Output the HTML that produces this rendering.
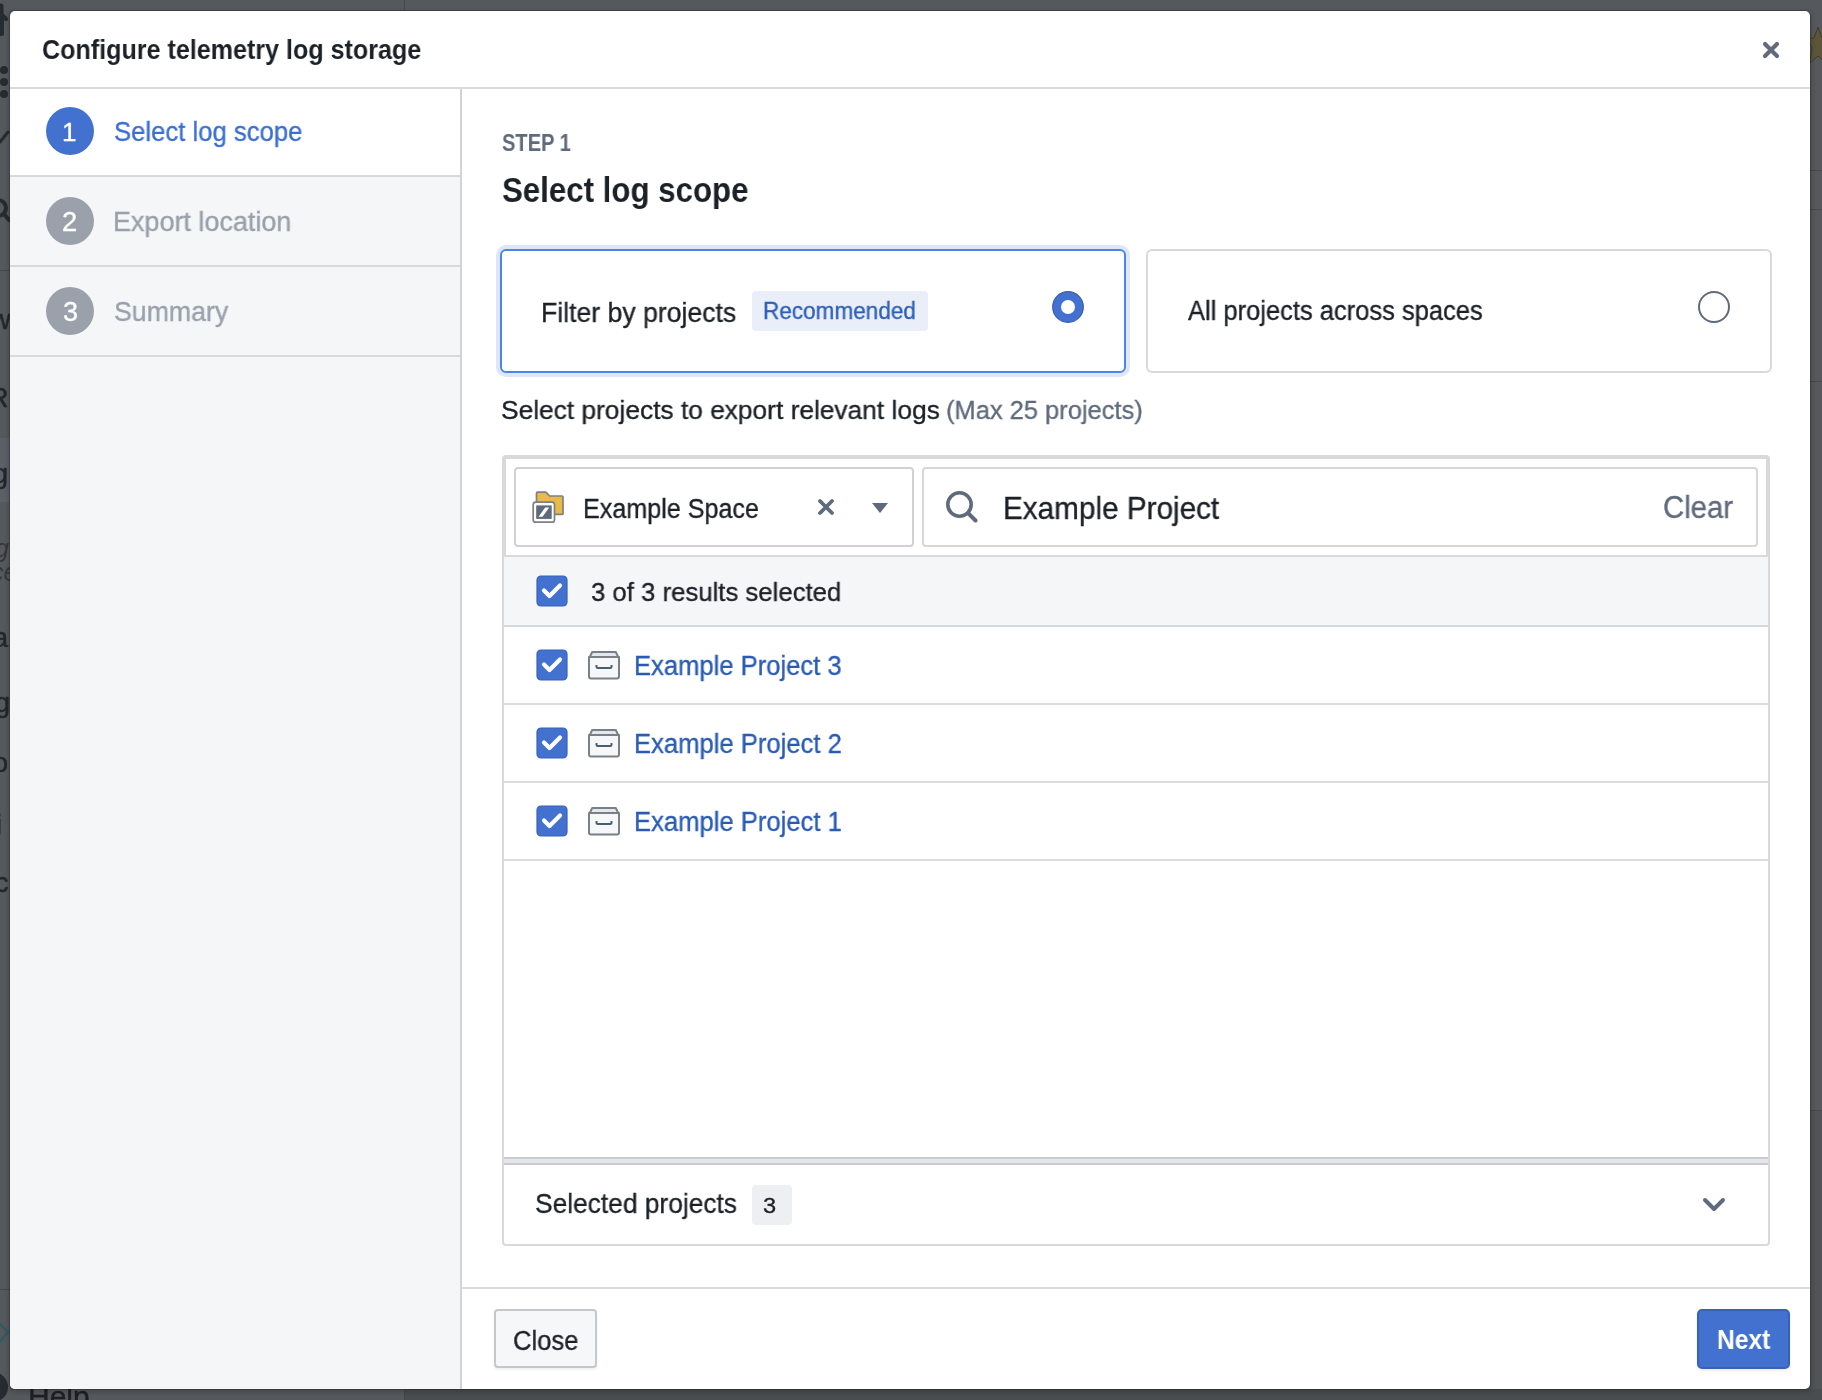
<!DOCTYPE html>
<html><head><meta charset="utf-8"><style>
html,body{margin:0;padding:0;}
body{width:1822px;height:1400px;position:relative;overflow:hidden;background:#55585c;font-family:"Liberation Sans",sans-serif;}
.a{position:absolute;display:block;}
.t{position:absolute;white-space:nowrap;line-height:1;transform-origin:0 0;will-change:transform;}
</style></head><body>
<!-- background hints -->
<div class="a" style="left:0;top:0;width:1822px;height:1400px;background:#55585c"></div>
<div class="a" style="left:405px;top:1110px;width:1417px;height:290px;background:#505357"></div><div class="a" style="left:405px;top:1389px;width:1417px;height:11px;background:#4a4d50"></div><div class="a" style="left:1810px;top:1110px;width:12px;height:1px;background:#45484c"></div>
<div class="a" style="left:404px;top:0;width:1px;height:1400px;background:#45484c"></div>
<div class="a" style="left:1810px;top:170px;width:12px;height:1px;background:#46494d"></div>
<div class="a" style="left:1810px;top:209px;width:12px;height:1px;background:#46494d"></div>
<div class="a" style="left:1810px;top:381px;width:12px;height:1px;background:#46494d"></div>
<svg class="a" style="left:1806px;top:26px" width="24" height="38" viewBox="0 0 24 38"><path d="M12 1 L16 12 L24 13 L18 21 L20 37 L12 30 L4 37 L6 21 L0 13 L8 12 Z" fill="#5d5539" stroke="#3f3b2c" stroke-width="1"/></svg>
<!-- left nav fragments -->
<svg class="a" style="left:-10px;top:2px" width="20" height="36" viewBox="0 0 20 36"><path d="M11 4 V30" stroke="#262a31" stroke-width="5" stroke-linecap="round"/><path d="M11 12 L16 17" stroke="#262a31" stroke-width="4" stroke-linecap="round"/><rect x="0" y="17" width="14" height="17" rx="2" fill="#262a31"/></svg>
<div class="a" style="left:0;top:66px;width:8px;height:8px;border-radius:50%;background:#262a31"></div>
<div class="a" style="left:0;top:78px;width:8px;height:8px;border-radius:50%;background:#262a31"></div>
<div class="a" style="left:0;top:90px;width:8px;height:8px;border-radius:50%;background:#262a31"></div>
<svg class="a" style="left:0;top:128px" width="10" height="18" viewBox="0 0 10 18"><path d="M0 14 L8 4" stroke="#262a31" stroke-width="3" stroke-linecap="round"/></svg>
<svg class="a" style="left:-12px;top:196px" width="24" height="32" viewBox="0 0 24 32"><circle cx="10" cy="12" r="8" fill="none" stroke="#262a31" stroke-width="4"/><path d="M16 18 L21 24" stroke="#262a31" stroke-width="4" stroke-linecap="round"/></svg>
<div class="a" style="left:0;top:270px;width:10px;height:1px;background:#45484c"></div>
<div class="a" style="left:0;top:438px;width:10px;height:64px;background:#5b5f66"></div>
<div class="t" style="left:-9px;top:307px;font-size:27px;color:#23272d;-webkit-text-stroke:0.5px #23272d">w</div>
<div class="t" style="left:-11px;top:385px;font-size:27px;color:#23272d;-webkit-text-stroke:0.5px #23272d">R</div>
<div class="t" style="left:-7px;top:461px;font-size:27px;color:#23272d;-webkit-text-stroke:0.5px #23272d">g</div>
<div class="t" style="left:-5px;top:536px;font-size:25px;font-style:italic;color:#34383e">g</div>
<div class="t" style="left:-9px;top:560px;font-size:25px;font-style:italic;color:#34383e">ce</div>
<div class="t" style="left:-7px;top:625px;font-size:27px;color:#23272d;-webkit-text-stroke:0.5px #23272d">a</div>
<div class="t" style="left:-5px;top:690px;font-size:27px;color:#23272d;-webkit-text-stroke:0.5px #23272d">g</div>
<div class="t" style="left:-7px;top:750px;font-size:27px;color:#23272d;-webkit-text-stroke:0.5px #23272d">o</div>
<div class="t" style="left:-4px;top:812px;font-size:27px;color:#23272d;-webkit-text-stroke:0.5px #23272d">i</div>
<div class="t" style="left:-5px;top:870px;font-size:27px;color:#23272d;-webkit-text-stroke:0.5px #23272d">c</div>
<div class="a" style="left:0;top:1289px;width:10px;height:1px;background:#45484c"></div>
<svg class="a" style="left:-6px;top:1318px" width="16" height="30" viewBox="0 0 16 30"><path d="M2 2 L14 14 L2 28" fill="none" stroke="#2f5a60" stroke-width="2.5"/></svg>
<div class="a" style="left:-22px;top:1372px;width:30px;height:30px;border-radius:50%;background:#262a31"></div>
<div class="t" style="left:28px;top:1382px;font-size:30px;color:#1c1f24;-webkit-text-stroke:0.4px #1c1f24">Help</div>

<!-- dialog -->
<div class="a" style="left:10px;top:11px;width:1800px;height:1378px;background:#fff;border-radius:5px;overflow:hidden;box-shadow:0 0 0 1px rgba(17,20,24,0.28),0 2px 5px 1px rgba(17,20,24,0.25)">
  <div class="a" style="left:0;top:76px;width:1800px;height:2px;background:#dadada"></div>
  <div class="a" style="left:0;top:78px;width:450px;height:1300px;background:#f5f6f8"></div>
  <div class="a" style="left:450px;top:78px;width:2px;height:1300px;background:#d1d3d7"></div>
  <div class="a" style="left:0;top:78px;width:450px;height:86px;background:#ffffff"></div>
  <div class="a" style="left:0;top:164px;width:450px;height:2px;background:#d9d9d9"></div>
  <div class="a" style="left:0;top:254px;width:450px;height:2px;background:#d9d9d9"></div>
  <div class="a" style="left:0;top:344px;width:450px;height:2px;background:#d9d9d9"></div>
  <div class="a" style="left:452px;top:1276px;width:1348px;height:2px;background:#dadada"></div>
</div>

<!-- close x -->
<svg class="a" style="left:1761px;top:40px" width="20" height="20" viewBox="0 0 20 20"><path d="M4 4 L16 16 M16 4 L4 16" stroke="#5f6b7c" stroke-width="4.2" stroke-linecap="round"/></svg>

<!-- step circles -->
<div class="a" style="left:46px;top:107px;width:48px;height:48px;border-radius:50%;background:#4371cf"></div>
<div class="a" style="left:46px;top:197px;width:48px;height:48px;border-radius:50%;background:#9aa1ab"></div>
<div class="a" style="left:46px;top:287px;width:48px;height:48px;border-radius:50%;background:#9aa1ab"></div>

<!-- cards -->
<div class="a" style="left:500px;top:249px;width:622px;height:120px;border:2px solid #4c86e3;border-radius:6px;box-shadow:0 0 0 4px #dde7f8;background:#fff"></div>
<div class="a" style="left:1146px;top:249px;width:622px;height:120px;border:2px solid #d9d9d9;border-radius:6px;background:#fff"></div>
<div class="a" style="left:752px;top:291px;width:176px;height:40px;border-radius:4px;background:#e9eef8"></div>
<!-- radio checked -->
<svg class="a" style="left:1052px;top:291px" width="32" height="32" viewBox="0 0 32 32"><circle cx="16" cy="16" r="15.3" fill="#4371cf" stroke="#3560b0" stroke-width="1.2"/><circle cx="16" cy="16" r="7" fill="#fff"/></svg>
<!-- radio unchecked -->
<svg class="a" style="left:1698px;top:291px" width="32" height="32" viewBox="0 0 32 32"><circle cx="16" cy="16" r="15" fill="#fff" stroke="#5f6b7c" stroke-width="2"/></svg>

<!-- project box -->
<div class="a" style="left:502px;top:455px;width:1264px;height:787px;border:2px solid #d9d9d9;border-radius:4px;background:#fff"></div>
<div class="a" style="left:504px;top:457px;width:1264px;height:100px;border:2px solid #d9d9d9;border-bottom:none;box-sizing:border-box"></div>
<div class="a" style="left:504px;top:555px;width:1264px;height:2px;background:#d9d9d9"></div>
<div class="a" style="left:504px;top:557px;width:1264px;height:68px;background:#f5f6f8"></div>
<div class="a" style="left:504px;top:625px;width:1264px;height:2px;background:#d6d8db"></div>
<div class="a" style="left:504px;top:703px;width:1264px;height:2px;background:#dcdcdc"></div>
<div class="a" style="left:504px;top:781px;width:1264px;height:2px;background:#dcdcdc"></div>
<div class="a" style="left:504px;top:859px;width:1264px;height:2px;background:#dcdcdc"></div>
<div class="a" style="left:504px;top:1157px;width:1264px;height:2px;background:#c9cbcf"></div>
<div class="a" style="left:504px;top:1159px;width:1264px;height:4px;background:#e5e7ea"></div>
<div class="a" style="left:504px;top:1163px;width:1264px;height:2px;background:#c9cbcf"></div>

<!-- select -->
<div class="a" style="left:514px;top:467px;width:396px;height:76px;border:2px solid #cfd1d4;border-radius:4px;background:#fff"></div>
<div class="a" style="left:922px;top:467px;width:832px;height:76px;border:2px solid #d7d7d7;border-radius:4px;background:#fff"></div>
<!-- folder icon -->
<svg class="a" style="left:530px;top:489px" width="36" height="36" viewBox="0 0 36 36">
 <path d="M7.5 3.2 H15.8 L19.7 7 H32 a1 1 0 0 1 1 1 V24.4 a1 1 0 0 1 -1 1 H7.5 a1 1 0 0 1 -1 -1 V4.2 a1 1 0 0 1 1 -1 Z" fill="#e9b949" stroke="#7d8085" stroke-width="1.7"/>
 <rect x="3.2" y="13.2" width="21.3" height="20" rx="2.5" fill="#fff" stroke="#7d8085" stroke-width="1.7"/>
 <rect x="6.2" y="16.4" width="15.5" height="13.5" fill="#5f6b7c"/>
 <path d="M8.5 27.8 H12.5 L19.2 18.6 H15.2 Z" fill="#fff"/>
</svg>
<!-- select x -->
<svg class="a" style="left:816px;top:497px" width="20" height="20" viewBox="0 0 20 20"><path d="M4 4 L16 16 M16 4 L4 16" stroke="#5f6b7c" stroke-width="3.8" stroke-linecap="round"/></svg>
<!-- caret -->
<svg class="a" style="left:872px;top:503px" width="16" height="10" viewBox="0 0 16 10"><path d="M0 0 H16 L8 10 Z" fill="#5f6b7c"/></svg>
<!-- search icon -->
<svg class="a" style="left:946px;top:491px" width="32" height="32" viewBox="0 0 32 32"><circle cx="13.5" cy="13.5" r="11.7" fill="none" stroke="#5f6b7c" stroke-width="3.6"/><path d="M22 22 L29.5 29.5" stroke="#5f6b7c" stroke-width="4" stroke-linecap="round"/></svg>

<svg class="a" style="left:536px;top:575px" width="32" height="32" viewBox="0 0 32 32"><rect x="1" y="1" width="30" height="30" rx="4" fill="#4371cf" stroke="#3a62b6" stroke-width="1.2"/><path d="M8 15.5 L13.5 21 L24 10.5" fill="none" stroke="#fff" stroke-width="4.2" stroke-linecap="round" stroke-linejoin="round"/></svg>
<svg class="a" style="left:536px;top:649px" width="32" height="32" viewBox="0 0 32 32"><rect x="1" y="1" width="30" height="30" rx="4" fill="#4371cf" stroke="#3a62b6" stroke-width="1.2"/><path d="M8 15.5 L13.5 21 L24 10.5" fill="none" stroke="#fff" stroke-width="4.2" stroke-linecap="round" stroke-linejoin="round"/></svg><svg class="a" style="left:588px;top:649px" width="32" height="32" viewBox="0 0 32 32"><path d="M1.8 8 L4.2 3 H27.8 L30.2 8 Z" fill="#e3e8f0" stroke="#7b8085" stroke-width="2" stroke-linejoin="round"/><path d="M1 8 H31 V27.5 a2 2 0 0 1 -2 2 H3 a2 2 0 0 1 -2 -2 Z" fill="#f6f7f9" stroke="#7b8085" stroke-width="2" stroke-linejoin="round"/><path d="M8.5 16 v1.5 a1.5 1.5 0 0 0 1.5 1.5 h12 a1.5 1.5 0 0 0 1.5 -1.5 v-1.5" fill="none" stroke="#4a5d70" stroke-width="2"/></svg><svg class="a" style="left:536px;top:727px" width="32" height="32" viewBox="0 0 32 32"><rect x="1" y="1" width="30" height="30" rx="4" fill="#4371cf" stroke="#3a62b6" stroke-width="1.2"/><path d="M8 15.5 L13.5 21 L24 10.5" fill="none" stroke="#fff" stroke-width="4.2" stroke-linecap="round" stroke-linejoin="round"/></svg><svg class="a" style="left:588px;top:727px" width="32" height="32" viewBox="0 0 32 32"><path d="M1.8 8 L4.2 3 H27.8 L30.2 8 Z" fill="#e3e8f0" stroke="#7b8085" stroke-width="2" stroke-linejoin="round"/><path d="M1 8 H31 V27.5 a2 2 0 0 1 -2 2 H3 a2 2 0 0 1 -2 -2 Z" fill="#f6f7f9" stroke="#7b8085" stroke-width="2" stroke-linejoin="round"/><path d="M8.5 16 v1.5 a1.5 1.5 0 0 0 1.5 1.5 h12 a1.5 1.5 0 0 0 1.5 -1.5 v-1.5" fill="none" stroke="#4a5d70" stroke-width="2"/></svg><svg class="a" style="left:536px;top:805px" width="32" height="32" viewBox="0 0 32 32"><rect x="1" y="1" width="30" height="30" rx="4" fill="#4371cf" stroke="#3a62b6" stroke-width="1.2"/><path d="M8 15.5 L13.5 21 L24 10.5" fill="none" stroke="#fff" stroke-width="4.2" stroke-linecap="round" stroke-linejoin="round"/></svg><svg class="a" style="left:588px;top:805px" width="32" height="32" viewBox="0 0 32 32"><path d="M1.8 8 L4.2 3 H27.8 L30.2 8 Z" fill="#e3e8f0" stroke="#7b8085" stroke-width="2" stroke-linejoin="round"/><path d="M1 8 H31 V27.5 a2 2 0 0 1 -2 2 H3 a2 2 0 0 1 -2 -2 Z" fill="#f6f7f9" stroke="#7b8085" stroke-width="2" stroke-linejoin="round"/><path d="M8.5 16 v1.5 a1.5 1.5 0 0 0 1.5 1.5 h12 a1.5 1.5 0 0 0 1.5 -1.5 v-1.5" fill="none" stroke="#4a5d70" stroke-width="2"/></svg>

<!-- selected projects tag -->
<div class="a" style="left:752px;top:1185px;width:40px;height:40px;border-radius:4px;background:#edeff2"></div>
<!-- chevron -->
<svg class="a" style="left:1700px;top:1194px" width="28" height="20" viewBox="0 0 28 20"><path d="M5 6 L14 15 L23 6" fill="none" stroke="#5f6b7c" stroke-width="4" stroke-linecap="round" stroke-linejoin="round"/></svg>

<!-- buttons -->
<div class="a" style="left:494px;top:1309px;width:99px;height:55px;border:2px solid #c5c7cb;border-radius:4px;background:#f6f7f9;box-shadow:0 2px 3px rgba(0,0,0,0.06)"></div>
<div class="a" style="left:1697px;top:1309px;width:89px;height:56px;border:2px solid #3a62b4;border-radius:5px;background:#4371cf;box-shadow:0 2px 3px rgba(0,0,0,0.08)"></div>

<div class="t" style="left:42.00px;top:36.75px;font-size:27px;font-weight:bold;color:#1c2127;transform:scaleX(0.9294)">Configure telemetry log storage</div><div class="t" style="left:62.43px;top:119.40px;font-size:26px;font-weight:normal;color:#ffffff;transform:scaleX(0.9928);-webkit-text-stroke:0.35px #ffffff">1</div><div class="t" style="left:113.52px;top:118.55px;font-size:27px;font-weight:normal;color:#3d6fd0;transform:scaleX(0.9515);-webkit-text-stroke:0.35px #3d6fd0">Select log scope</div><div class="t" style="left:62.33px;top:208.95px;font-size:27px;font-weight:normal;color:#ffffff;transform:scaleX(1.0145);-webkit-text-stroke:0.35px #ffffff">2</div><div class="t" style="left:113.44px;top:207.52px;font-size:27.5px;font-weight:normal;color:#98a0ab;transform:scaleX(0.9808);-webkit-text-stroke:0.35px #98a0ab">Export location</div><div class="t" style="left:62.63px;top:298.95px;font-size:27px;font-weight:normal;color:#ffffff;transform:scaleX(0.9929);-webkit-text-stroke:0.35px #ffffff">3</div><div class="t" style="left:113.97px;top:297.52px;font-size:27.5px;font-weight:normal;color:#98a0ab;transform:scaleX(0.9703);-webkit-text-stroke:0.35px #98a0ab">Summary</div><div class="t" style="left:501.80px;top:132.05px;font-size:23px;font-weight:bold;color:#5f6b7c;transform:scaleX(0.8734)">STEP 1</div><div class="t" style="left:502.16px;top:171.75px;font-size:35px;font-weight:bold;color:#1c2127;transform:scaleX(0.8925)">Select log scope</div><div class="t" style="left:540.87px;top:299.95px;font-size:27px;font-weight:normal;color:#1c2127;transform:scaleX(0.9859);-webkit-text-stroke:0.35px #1c2127">Filter by projects</div><div class="t" style="left:763.30px;top:300.42px;font-size:23.5px;font-weight:normal;color:#2d5fb8;transform:scaleX(0.9594);-webkit-text-stroke:0.35px #2d5fb8">Recommended</div><div class="t" style="left:1187.70px;top:297.75px;font-size:27px;font-weight:normal;color:#1c2127;transform:scaleX(0.9446);-webkit-text-stroke:0.35px #1c2127">All projects across spaces</div><div class="t" style="left:501.28px;top:396.78px;font-size:26.5px;font-weight:normal;color:#1c2127;transform:scaleX(0.9929);-webkit-text-stroke:0.35px #1c2127">Select projects to export relevant logs</div><div class="t" style="left:945.77px;top:396.98px;font-size:26.5px;font-weight:normal;color:#5f6b7c;transform:scaleX(0.9608);-webkit-text-stroke:0.35px #5f6b7c">(Max 25 projects)</div><div class="t" style="left:583.39px;top:495.55px;font-size:27px;font-weight:normal;color:#1c2127;transform:scaleX(0.9308);-webkit-text-stroke:0.35px #1c2127">Example Space</div><div class="t" style="left:1003.12px;top:493.27px;font-size:30.5px;font-weight:normal;color:#1c2127;transform:scaleX(0.9736);-webkit-text-stroke:0.35px #1c2127">Example Project</div><div class="t" style="left:1662.83px;top:492.25px;font-size:31px;font-weight:normal;color:#5f6b7c;transform:scaleX(0.9455);-webkit-text-stroke:0.35px #5f6b7c">Clear</div><div class="t" style="left:591.07px;top:578.98px;font-size:26.5px;font-weight:normal;color:#1c2127;transform:scaleX(0.9709);-webkit-text-stroke:0.35px #1c2127">3 of 3 results selected</div><div class="t" style="left:633.65px;top:653.45px;font-size:27px;font-weight:normal;color:#2b5cb4;transform:scaleX(0.9479);-webkit-text-stroke:0.35px #2b5cb4">Example Project 3</div><div class="t" style="left:633.65px;top:731.45px;font-size:27px;font-weight:normal;color:#2b5cb4;transform:scaleX(0.9491);-webkit-text-stroke:0.35px #2b5cb4">Example Project 2</div><div class="t" style="left:633.65px;top:809.45px;font-size:27px;font-weight:normal;color:#2b5cb4;transform:scaleX(0.9491);-webkit-text-stroke:0.35px #2b5cb4">Example Project 1</div><div class="t" style="left:534.68px;top:1190.30px;font-size:28px;font-weight:normal;color:#1c2127;transform:scaleX(0.9404);-webkit-text-stroke:0.35px #1c2127">Selected projects</div><div class="t" style="left:763.46px;top:1194.60px;font-size:22px;font-weight:normal;color:#1c2127;transform:scaleX(1.0735);-webkit-text-stroke:0.35px #1c2127">3</div><div class="t" style="left:512.72px;top:1327.75px;font-size:27px;font-weight:normal;color:#1c2127;transform:scaleX(0.9485);-webkit-text-stroke:0.35px #1c2127">Close</div><div class="t" style="left:1716.68px;top:1326.00px;font-size:28px;font-weight:bold;color:#ffffff;transform:scaleX(0.8783)">Next</div>
</body></html>
